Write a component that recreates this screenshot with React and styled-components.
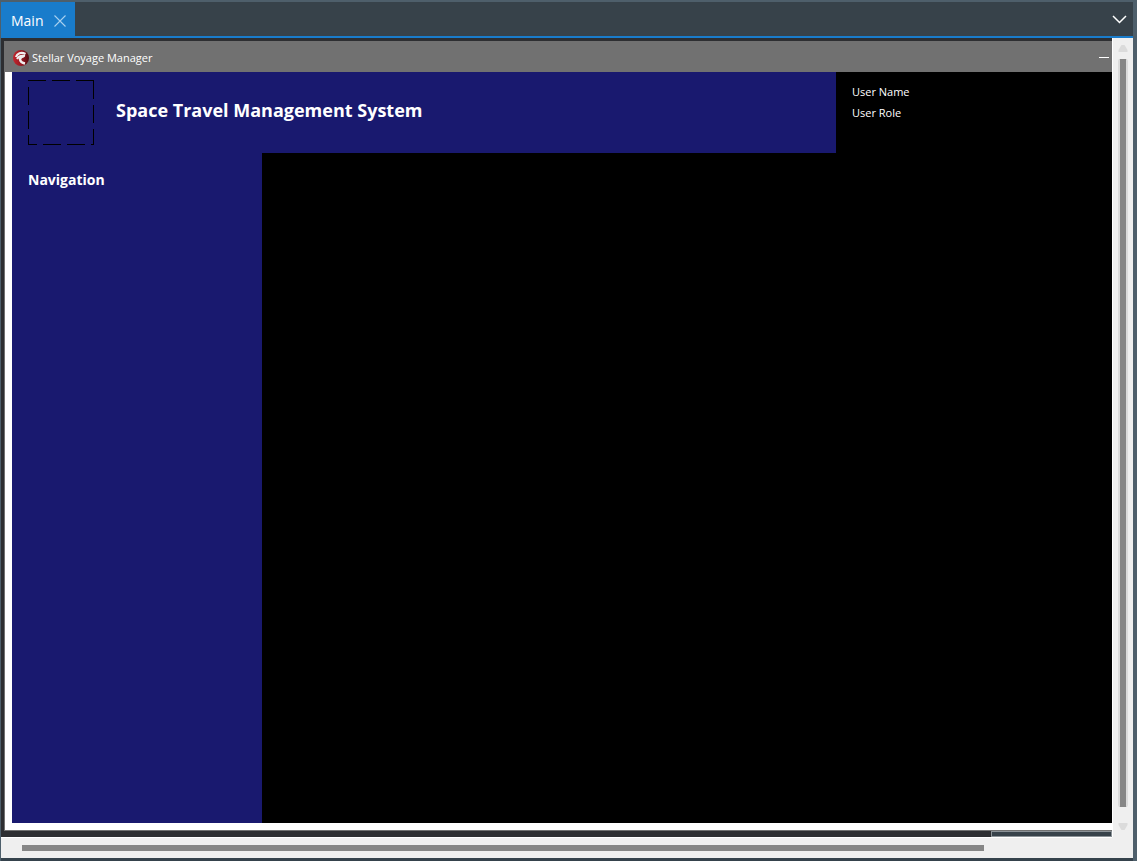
import React from "react";
import styled, { createGlobalStyle } from "styled-components";

const GlobalStyle = createGlobalStyle`
  *, *::before, *::after { box-sizing: border-box; }
  body {
    margin: 0;
    background: #4e5f6b;
    font-family: "Open Sans", "Noto Sans", sans-serif;
    color: #fff;
  }
  h1, h2, p { margin: 0; }
`;

const IconButton = styled.button`
  display: flex;
  align-items: center;
  justify-content: center;
  padding: 0;
  border: 0;
  background: none;
  color: inherit;
`;

const Shell = styled.div`
  display: flex;
  flex-direction: column;
  min-height: 100vh;
  padding: 2px 4px 0 1px;
  background: #4e5f6b;
`;

const TabBar = styled.header`
  display: flex;
  align-items: stretch;
  justify-content: space-between;
  height: 36px;
  padding-right: 6px;
  border-bottom: 2px solid #197ccb;
  background: #37424a;
`;

const Tab = styled.div`
  display: flex;
  align-items: center;
  justify-content: space-between;
  width: 74px;
  padding: 3px 9px 0 10px;
  background: #197ccb;
  font-size: 14px;
  line-height: 20px;
  font-weight: 400;
`;

const Designer = styled.main`
  flex: 1;
  display: grid;
  grid-template-columns: minmax(0, 1fr) 21px;
  grid-template-rows: minmax(0, 1fr) 21px;
  border-bottom: 3px solid #35424c;
  background: #efefef;
`;

const Canvas = styled.div`
  display: flex;
  flex-direction: column;
  padding: 3px 0 0 3px;
  background: #2d2e31;
`;

const Form = styled.section`
  flex: 1;
  display: flex;
  flex-direction: column;
  border-left: 1px solid #717171;
  border-bottom: 1px solid #717171;
  background: #fff;
`;

const TitleBar = styled.div`
  display: flex;
  align-items: center;
  gap: 3px;
  height: 31px;
  padding: 2px 3px 0 8px;
  background: #717171;
`;

const Caption = styled.span`
  flex: 1;
  font-size: 11px;
  line-height: 16px;
`;

const FormBody = styled.div`
  flex: 1;
  display: flex;
  flex-direction: column;
  margin: 0 0 7px 7px;
  background: #000;
`;

const TopRow = styled.div`
  display: flex;
  height: 81px;
`;

const Banner = styled.div`
  flex: 1;
  display: flex;
  align-items: flex-start;
  gap: 22px;
  padding: 8px 16px;
  background: #19196f;
`;

const Heading = styled.h1`
  padding-top: 18px;
  font-size: 18px;
  line-height: 24px;
  font-weight: 700;
`;

const UserPanel = styled.div`
  width: 276px;
  padding: 9px 16px;
  font-size: 11px;
  line-height: 21px;
`;

const Sidebar = styled.nav`
  flex: 1;
  width: 250px;
  padding: 16px;
  background: #19196f;
`;

const SidebarTitle = styled.h2`
  font-size: 14px;
  line-height: 22px;
  font-weight: 700;
`;

const CanvasEdge = styled.div`
  display: flex;
  justify-content: flex-end;
  height: 6px;
`;

const EdgeHandle = styled.div`
  width: 121px;
  border: 1px solid #8b9297;
  background: #37424a;
`;

const VerticalScroll = styled.div`
  display: flex;
  flex-direction: column;
  align-items: center;
  padding: 7px 0;
  border-left: 1px solid #fff;
`;

const VerticalThumb = styled.div`
  flex: 1;
  width: 10px;
  margin: 7px 0 16px;
  border: 2px solid #dbdbdb;
  border-width: 0 2px;
  border-radius: 2px;
  background: #868686;
`;

const HorizontalScroll = styled.div`
  padding: 7px 128px 0 21px;
  border-top: 1px solid #fff;
`;

const HorizontalThumb = styled.div`
  height: 6px;
  background: #868686;
`;

function HelmetIcon() {
  return (
    <svg width="16" height="16" viewBox="0 0 16 16" aria-hidden="true">
      <defs>
        <linearGradient id="badge" x1="0" y1="0" x2="1" y2="0">
          <stop offset="0" stopColor="#c3252d" />
          <stop offset="0.6" stopColor="#8f1720" />
          <stop offset="1" stopColor="#4f0b11" />
        </linearGradient>
      </defs>
      <circle cx="8" cy="8" r="8" fill="url(#badge)" />
      <g fill="none" stroke="#f0eded">
        <path d="M3 7C4 3.500 8 1.500 12.500 4" strokeWidth="2.200" />
        <path d="M4 9C5.500 6 8 5.200 12 6" strokeWidth="2" />
        <path d="M11 6C8.500 6.500 7 8 7 9.500C7.500 12 9.500 13 12 13.500" strokeWidth="2.400" />
      </g>
    </svg>
  );
}

function LogoPlaceholder() {
  return (
    <svg width="66" height="65" viewBox="0 0 66 65" role="img" aria-label="Logo" shapeRendering="crispEdges">
      <path
        d="M0 .5h18M24 .5h18M48 .5h18M65.5 1v18M65.5 25v18M65.5 49v16M63 64.5h3M39 64.5h18M15 64.5h18M0 64.5h9M.5 55v10M.5 31v18M.5 7v18"
        fill="none"
        stroke="#000"
      />
    </svg>
  );
}

function ScrollArrow({ down }) {
  return (
    <svg width="10" height="7" viewBox="0 0 10 7" aria-hidden="true">
      <path d={down ? "M.5 0h9v2L6.5 7h-3L.5 2z" : "M.5 7h9V5L6.5 0h-3L.5 5z"} fill="#dbdbdb" />
    </svg>
  );
}

export default function App() {
  return (
    <>
      <GlobalStyle />
      <Shell>
        <TabBar>
          <Tab>
            Main
            <IconButton aria-label="Close tab">
              <svg width="12" height="12" viewBox="0 0 12 12">
                <path d="M.5.5l11 11M11.5.5l-11 11" stroke="#a9d0ef" strokeWidth="1.1" />
              </svg>
            </IconButton>
          </Tab>
          <IconButton aria-label="Show open tabs">
            <svg width="15" height="9" viewBox="0 0 15 9">
              <path d="M1 1l6.5 6.5L14 1" fill="none" stroke="#fff" strokeWidth="1.5" />
            </svg>
          </IconButton>
        </TabBar>
        <Designer>
          <Canvas>
            <Form>
              <TitleBar>
                <HelmetIcon />
                <Caption>Stellar Voyage Manager</Caption>
                <IconButton aria-label="Minimize">
                  <svg width="10" height="1" viewBox="0 0 10 1">
                    <path d="M0 .5h10" stroke="#fff" />
                  </svg>
                </IconButton>
              </TitleBar>
              <FormBody>
                <TopRow>
                  <Banner>
                    <LogoPlaceholder />
                    <Heading>Space Travel Management System</Heading>
                  </Banner>
                  <UserPanel>
                    <p>User Name</p>
                    <p>User Role</p>
                  </UserPanel>
                </TopRow>
                <Sidebar>
                  <SidebarTitle>Navigation</SidebarTitle>
                </Sidebar>
              </FormBody>
            </Form>
            <CanvasEdge>
              <EdgeHandle />
            </CanvasEdge>
          </Canvas>
          <VerticalScroll>
            <ScrollArrow />
            <VerticalThumb />
            <ScrollArrow down />
          </VerticalScroll>
          <HorizontalScroll>
            <HorizontalThumb />
          </HorizontalScroll>
        </Designer>
      </Shell>
    </>
  );
}
